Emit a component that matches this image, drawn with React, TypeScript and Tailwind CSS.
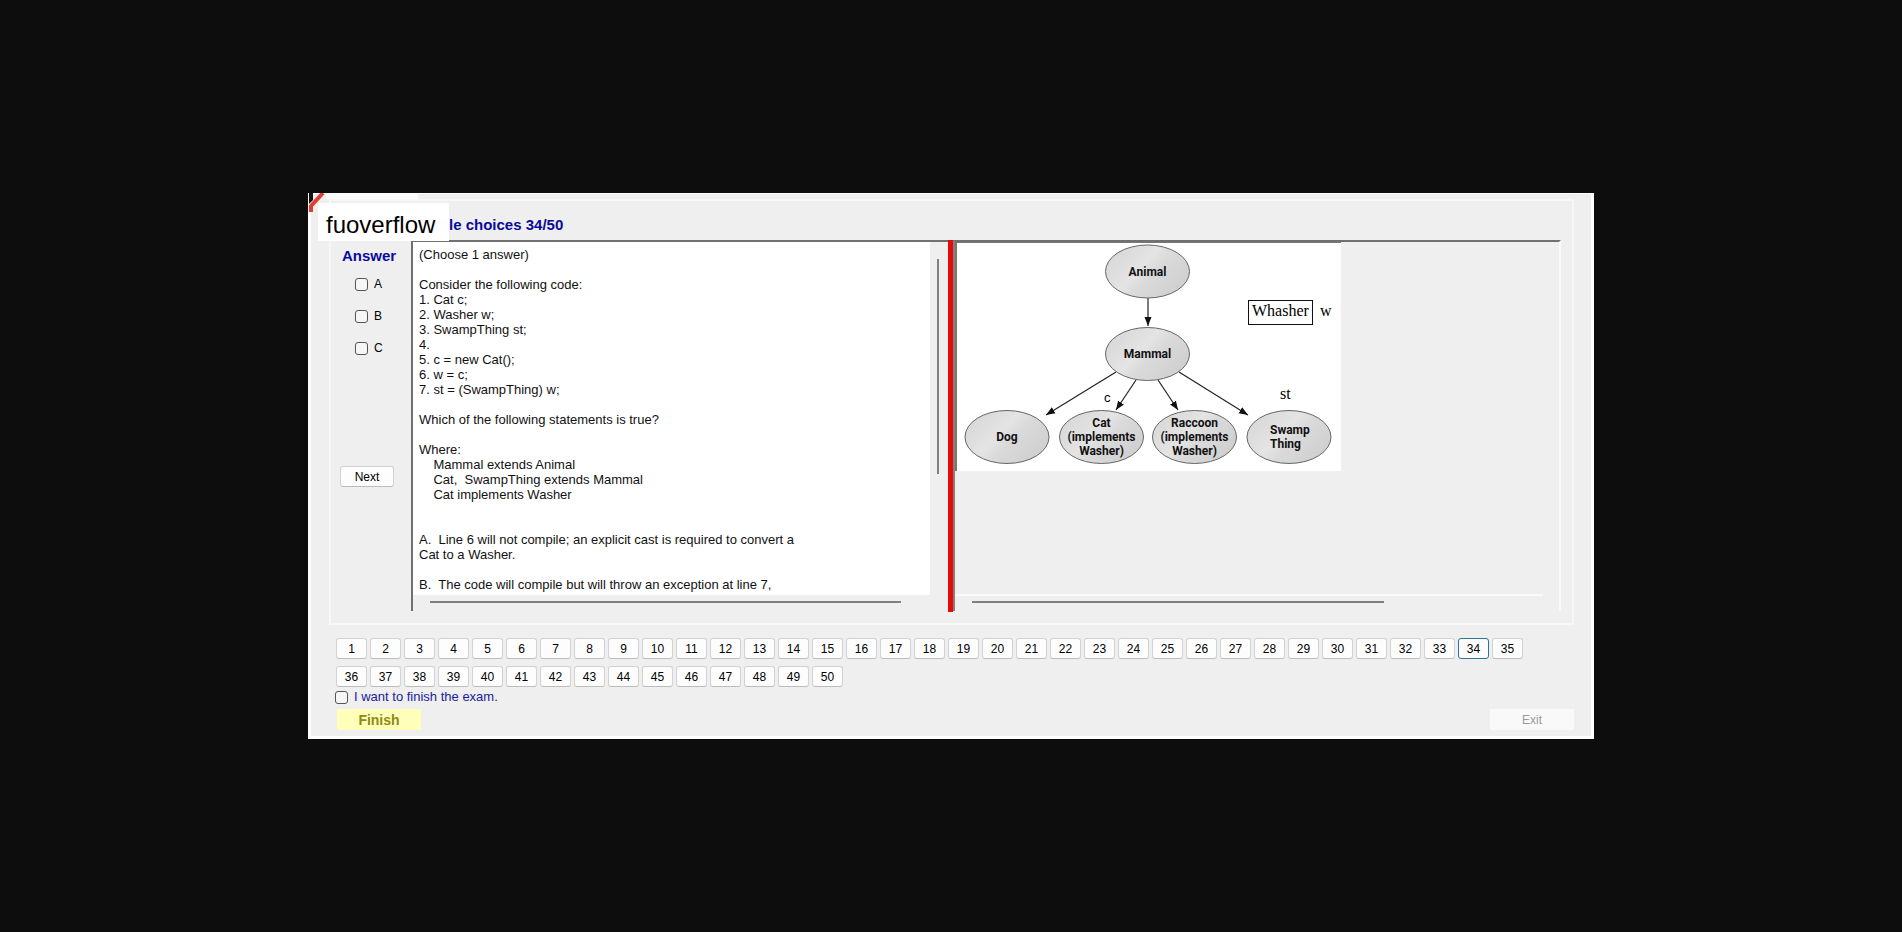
import React from "react";

const QUESTION = `(Choose 1 answer)

Consider the following code:
1. Cat c;
2. Washer w;
3. SwampThing st;
4.
5. c = new Cat();
6. w = c;
7. st = (SwampThing) w;

Which of the following statements is true?

Where:
    Mammal extends Animal
    Cat,  SwampThing extends Mammal
    Cat implements Washer


A.  Line 6 will not compile; an explicit cast is required to convert a
Cat to a Washer.

B.  The code will compile but will throw an exception at line 7,`;

const NODES = [
  { cx: 190.5, cy: 28.5, lines: ["Animal"] },
  { cx: 190.5, cy: 111, lines: ["Mammal"] },
  { cx: 50, cy: 194, lines: ["Dog"] },
  { cx: 144.5, cy: 194, lines: ["Cat", "(implements", "Washer)"] },
  { cx: 237.5, cy: 194, lines: ["Raccoon", "(implements", "Washer)"] },
  { cx: 332, cy: 194, lines: ["Swamp", "Thing"] },
];

const ARROWS = [
  [191, 55, 191, 83],
  [159, 129, 89, 172],
  [179, 137, 159, 167],
  [201, 137, 221, 167],
  [222, 129, 291, 172],
];

function ClassDiagram() {
  return (
    <svg width="384" height="228" viewBox="0 0 384 228" role="img" aria-label="Class hierarchy" className="block bg-white">
      <defs>
        <linearGradient id="shade" x1="0" y1="0" x2="1" y2="0.6">
          <stop offset="0" stopColor="#d4d4d4" />
          <stop offset="0.5" stopColor="#e4e4e4" />
          <stop offset="0.65" stopColor="#dadada" />
          <stop offset="1" stopColor="#d0d0d0" />
        </linearGradient>
        <marker id="head" viewBox="0 0 9 8" refX="9" refY="4" markerWidth="9" markerHeight="8" markerUnits="userSpaceOnUse" orient="auto">
          <path d="M0 0.5L9 4L0 7.5Z" fill="#111" />
        </marker>
      </defs>
      {ARROWS.map(([x1, y1, x2, y2]) => (
        <line key={`${x1}-${x2}`} x1={x1} y1={y1} x2={x2} y2={y2} stroke="#222" strokeWidth="1.2" markerEnd="url(#head)" />
      ))}
      {NODES.map((n) => (
        <g key={n.cx + n.cy}>
          <ellipse cx={n.cx} cy={n.cy} rx="42" ry="26.5" fill="url(#shade)" stroke="#666" />
          {n.lines.map((t, i) => (
            <text
              key={t}
              x={t === "Swamp" || t === "Thing" ? n.cx - 19 : n.cx}
              y={n.cy + 4 + (i - (n.lines.length - 1) / 2) * 14}
              textAnchor={t === "Swamp" || t === "Thing" ? "start" : "middle"}
              className="fill-[#111] font-[Roboto,sans-serif] text-[12px] font-bold"
            >
              {t}
            </text>
          ))}
        </g>
      ))}
      <rect x="291.5" y="57.5" width="64" height="24" fill="#fff" stroke="#111" />
      <g className="fill-black font-['Liberation_Serif',serif] text-[16px]">
        <text x="295" y="73">Whasher</text>
        <text x="363" y="73">w</text>
        <text x="323" y="156">st</text>
      </g>
      <text x="147" y="159" className="fill-black font-['Liberation_Sans',sans-serif] text-[13px]">c</text>
    </svg>
  );
}

const BOX = "m-0 size-[13px] shrink-0 appearance-none rounded-[3px] border border-[#555] bg-[#f6f6f6] checked:bg-[#0067c0]";
const BUTTON = "h-[21px] rounded-[3px] border border-[#d2d2d2] border-b-[#bcbcbc] bg-[#fdfdfd] text-[12px] leading-none text-black";

export default function App() {
  return (
    <div className="flex min-h-screen items-center justify-center bg-[#0d0d0d] font-['Liberation_Sans',Arial,sans-serif]">
      <main className="relative w-full max-w-[1286px] border-x-[3px] border-t border-b-[3px] border-white bg-[#efefef] pt-[5px] pr-[17px] pb-[6px] pl-[18px]">
        <svg width="110" height="20" viewBox="0 0 110 20" aria-hidden="true" className="absolute -top-px -left-[3px]">
          <rect x="18" width="92" height="6" fill="#fbfbfb" />
          <path d="M1 0H5V7L1 11Z" fill="#111" />
          <path d="M15 0L3 13V19" fill="none" stroke="#e23b32" strokeWidth="4" />
        </svg>
        <section className="border-2 border-[#f7f7f7] pr-[11px] pb-[12px]">
          <header className="flex h-[39px] items-start">
            <div className="relative z-10 mt-[2px] -ml-[13px] flex h-[38px] w-[131px] items-end bg-white pb-[2px] pl-[8px] text-[24px] leading-[28px] text-black">
              fuoverflow
            </div>
            <h1 className="mt-[15px] text-[15px] leading-[18px] font-bold text-[#0a0a9c]">le choices 34/50</h1>
          </header>
          <div className="flex items-stretch">
            <fieldset className="w-[80px] shrink-0">
              <legend className="ml-[11px] pt-[8px] text-[15px] leading-[16px] font-bold text-[#0a0a9c]">Answer</legend>
              <div className="mt-[12px] ml-[24px] flex flex-col gap-[16px]">
                {["A", "B", "C"].map((a) => (
                  <label key={a} className="flex h-[16px] items-center gap-[6px] text-[12px] text-black">
                    <input type="checkbox" className={BOX} />
                    {a}
                  </label>
                ))}
              </div>
              <button type="button" className={`${BUTTON} mt-[110px] ml-[9px] block w-[54px]`}>
                Next
              </button>
            </fieldset>
            <div className="flex h-[371px] w-[537px] shrink-0 flex-col border-t-2 border-l-2 border-[#707070]">
              <div className="flex flex-1">
                <pre className="flex-1 bg-white pt-[5px] pl-[6px] font-['Liberation_Sans',Arial,sans-serif] text-[13px] leading-[15px] text-[#111]">{QUESTION}</pre>
                <div className="w-[18px] pt-[17px] pl-[7px]">
                  <div className="h-[215px] w-[2px] bg-[#808080]" />
                </div>
              </div>
              <div className="h-[16px] pt-[6px] pl-[17px]">
                <div className="h-[2px] w-[471px] bg-[#808080]" />
              </div>
            </div>
            <div className="-mb-px w-[5px] shrink-0 bg-[#e30b0b]" />
            <div className="flex h-[371px] min-w-0 flex-1 flex-col border-t-2 border-r-2 border-l-2 border-t-[#707070] border-r-[#fafafa] border-l-[#8a7f78]">
              <div className="flex flex-1 items-start">
                <div className="border-t border-l-2 border-[#777]">
                  <ClassDiagram />
                </div>
              </div>
              <div className="mr-[16px] h-[17px] border-t-2 border-[#fafafa] pt-[5px] pl-[17px]">
                <div className="h-[2px] w-[412px] bg-[#808080]" />
              </div>
            </div>
          </div>
        </section>
        <nav aria-label="Questions" className="mt-[13px] ml-[7px] flex max-w-[1200px] flex-wrap gap-x-[3px] gap-y-[7px]">
          {Array.from({ length: 50 }, (_, i) => i + 1).map((n) => (
            <button key={n} type="button" className={`${BUTTON} w-[31px] ${n === 34 ? "!border-[#2b7596]" : ""}`}>
              {n}
            </button>
          ))}
        </nav>
        <label className="mt-[2px] ml-[6px] flex h-[16px] w-fit items-center gap-[6px] text-[13px] text-[#1a1a9c]">
          <input type="checkbox" className={BOX} />
          I want to finish the exam.
        </label>
        <div className="mt-[4px] ml-[8px] flex justify-between">
          <button type="button" className="h-[21px] w-[84px] bg-[#ffffb9] text-[14px] leading-none font-bold text-[#8c8c14]">
            Finish
          </button>
          <button type="button" disabled className="h-[21px] w-[84px] bg-[#f9f9f9] text-[12px] leading-none text-[#999]">
            Exit
          </button>
        </div>
      </main>
    </div>
  );
}
